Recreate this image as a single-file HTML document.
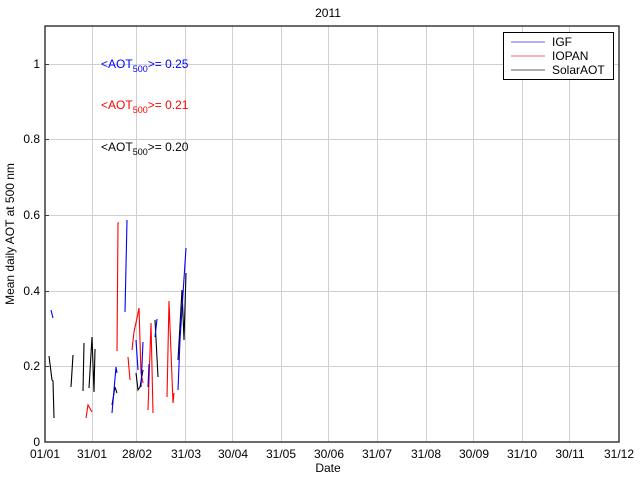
<!DOCTYPE html>
<html><head><meta charset="utf-8"><style>
html,body{margin:0;padding:0;background:#fff;}
svg{display:block;font-family:"Liberation Sans",sans-serif;}
</style></head><body>
<svg width="640" height="480" viewBox="0 0 640 480" xmlns="http://www.w3.org/2000/svg">
<rect width="640" height="480" fill="#fff"/>
<g stroke="#d0d0d0" stroke-width="1">
<line x1="92.5" y1="26" x2="92.5" y2="442"/>
<line x1="136.5" y1="26" x2="136.5" y2="442"/>
<line x1="185.5" y1="26" x2="185.5" y2="442"/>
<line x1="232.5" y1="26" x2="232.5" y2="442"/>
<line x1="281.5" y1="26" x2="281.5" y2="442"/>
<line x1="328.5" y1="26" x2="328.5" y2="442"/>
<line x1="377.5" y1="26" x2="377.5" y2="442"/>
<line x1="426.5" y1="26" x2="426.5" y2="442"/>
<line x1="473.5" y1="26" x2="473.5" y2="442"/>
<line x1="522.5" y1="26" x2="522.5" y2="442"/>
<line x1="569.5" y1="26" x2="569.5" y2="442"/>
<line x1="45" y1="366.5" x2="619" y2="366.5"/>
<line x1="45" y1="291.5" x2="619" y2="291.5"/>
<line x1="45" y1="215.5" x2="619" y2="215.5"/>
<line x1="45" y1="139.5" x2="619" y2="139.5"/>
<line x1="45" y1="64.5" x2="619" y2="64.5"/>
</g>
<g fill="none" stroke-width="1.1">
<g stroke="#000">
<polyline points="49,356 52,380 53,381 54,418"/>
<polyline points="71,387 73,355"/>
<polyline points="83,391 84,343"/>
<polyline points="89,388 92,337 94,392 95,349"/>
<polyline points="112,405 115,387 117,393"/>
<polyline points="136,373 138,390 140,387 143,370"/>
<polyline points="155,320 158,377"/>
<polyline points="178,360 182,290 184,340 186,273"/>
</g>
<g stroke="#f00">
<polyline points="117,351 118,223 119,223"/>
<polyline points="128,357 130,380"/>
<polyline points="132,350 134,332 137,318 139,308 141,373 143,383"/>
<polyline points="148,410 151,323 153,413"/>
<polyline points="167,397 169,301 173,403 174,393"/>
<polyline points="86,418 88,405 92,412"/>
</g>
<g stroke="#00f">
<polyline points="51,310 53,318"/>
<polyline points="112,413 116,367 117,373"/>
<polyline points="125,312 127,220"/>
<polyline points="136,340 138,370"/>
<polyline points="143,342 141,387"/>
<polyline points="148,387 149,364"/>
<polyline points="155,337 157,319"/>
<polyline points="178,390 180,340 186,248"/>
</g>
</g>
<rect x="45" y="26" width="574" height="416" fill="none" stroke="#3c3c3c" stroke-width="1.5"/>
<g stroke="#3c3c3c">
<line x1="45" y1="366.5" x2="49" y2="366.5"/><line x1="45" y1="291.5" x2="49" y2="291.5"/>
<line x1="45" y1="215.5" x2="49" y2="215.5"/><line x1="45" y1="139.5" x2="49" y2="139.5"/>
<line x1="45" y1="64.5" x2="49" y2="64.5"/>
</g>
<g font-size="12" fill="#000" text-anchor="end">
<text x="40" y="446">0</text><text x="40" y="370">0.2</text><text x="40" y="295">0.4</text>
<text x="40" y="219">0.6</text><text x="40" y="143">0.8</text><text x="40" y="68">1</text>
</g>
<g font-size="12" fill="#000" text-anchor="middle">
<text x="45" y="458">01/01</text><text x="92" y="458">31/01</text><text x="137" y="458">28/02</text>
<text x="186" y="458">31/03</text><text x="233" y="458">30/04</text><text x="281" y="458">31/05</text>
<text x="329" y="458">30/06</text><text x="377" y="458">31/07</text><text x="426" y="458">31/08</text>
<text x="474" y="458">30/09</text><text x="522" y="458">31/10</text><text x="570" y="458">30/11</text>
<text x="619" y="458">31/12</text>
<text x="328" y="472">Date</text>
<text x="328" y="17">2011</text>
<text transform="translate(14,234) rotate(-90)">Mean daily AOT at 500 nm</text>
</g>
<g font-size="12">
<text x="101" y="68" fill="#00f">&lt;AOT<tspan font-size="9" dy="4">500</tspan><tspan dy="-4">&gt;= 0.25</tspan></text>
<text x="101" y="109" fill="#f00">&lt;AOT<tspan font-size="9" dy="4">500</tspan><tspan dy="-4">&gt;= 0.21</tspan></text>
<text x="101" y="151" fill="#000">&lt;AOT<tspan font-size="9" dy="4">500</tspan><tspan dy="-4">&gt;= 0.20</tspan></text>
</g>
<rect x="503.5" y="32.5" width="110" height="47" fill="#fff" stroke="#000" stroke-width="1"/>
<line x1="511" y1="42" x2="545" y2="42" stroke="#6060ff"/>
<line x1="511" y1="56" x2="545" y2="56" stroke="#ff6060"/>
<line x1="511" y1="70" x2="545" y2="70" stroke="#606060"/>
<g font-size="12" fill="#000">
<text x="552" y="46">IGF</text><text x="552" y="60">IOPAN</text><text x="552" y="74">SolarAOT</text>
</g>
</svg>
</body></html>
